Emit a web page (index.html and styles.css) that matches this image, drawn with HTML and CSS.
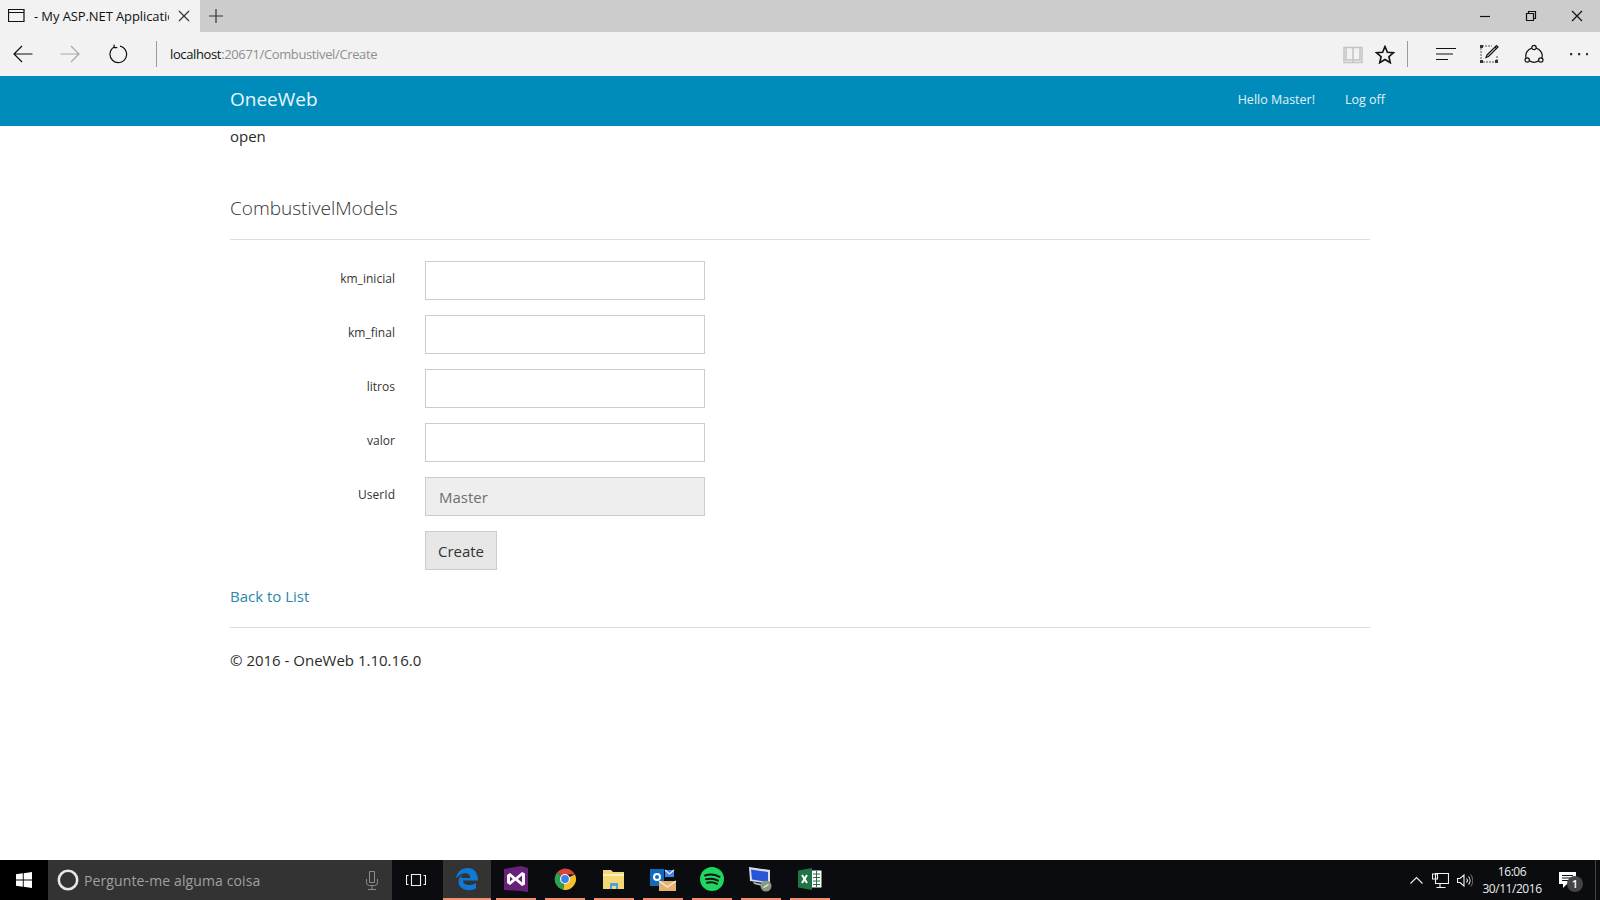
FILE: index.html
```html
<!DOCTYPE html>
<html lang="pt">
<head>
<meta charset="utf-8">
<title>My ASP.NET Application</title>
<link rel="stylesheet" href="styles.css">
</head>
<body>
<div class="tabbar">
  <div class="tab">
    <svg class="ico" width="18" height="14" viewBox="0 0 18 14"><path d="M.5.5h15.500v12H.5zM.5 3.500h15.500" class="s-black"/></svg>
    <span class="tab-title">- My ASP.NET Application</span>
    <svg class="tab-close" width="12" height="12" viewBox="0 0 12 12"><path d="M1 1l10 10M11 1L1 11" class="s-dark"/></svg>
  </div>
  <svg class="tab-new" width="14" height="14" viewBox="0 0 14 14"><path d="M7 0v14M0 7h14" class="s-dark"/></svg>
  <div class="win-controls">
    <svg width="12" height="12" viewBox="0 0 12 12"><path d="M1 6.500h10" class="s-black"/></svg>
    <svg width="12" height="12" viewBox="0 0 12 12"><path d="M1.500 3.500h7v7h-7zM3.500 3.500v-2h7v7h-2" class="s-black"/></svg>
    <svg width="12" height="12" viewBox="0 0 12 12"><path d="M1 1l10 10M11 1L1 11" class="s-black"/></svg>
  </div>
</div>
<div class="toolbar">
  <div class="tool-left">
    <svg width="20" height="18" viewBox="0 0 20 18"><path d="M19.500 9H1M9 1L1 9l8 8" class="s-black"/></svg>
    <svg width="20" height="18" viewBox="0 0 20 18"><path d="M.5 9H19M11 1l8 8-8 8" class="s-muted"/></svg>
    <svg class="i-refresh" width="20" height="20" viewBox="0 0 20 20"><path d="M6.200 3.100A8.300 8.300 0 1 0 12 2.200M6 .6l.4 3 2.900.1" class="s-black"/></svg>
  </div>
  <div class="address">
    <span class="host">localhost</span><span class="path">:20671/Combustivel/Create</span>
  </div>
  <div class="tool-right">
    <svg class="i-read" width="20" height="19" viewBox="0 0 20 19"><path d="M1 2.500h8.500l.5 1 .5-1H19v15h-8.500l-.5-1-.5 1H1zM10 3.500v13M3 2.500v12.500h7M17 2.500v12.500h-7" class="s-light"/></svg>
    <svg class="i-star" width="20" height="19" viewBox="0 0 20 19"><path d="M10 1.500l2.400 5.700 6.100.5-4.600 4 1.400 6-5.300-3.200-5.300 3.200 1.400-6-4.600-4 6.100-.5z" class="s-heavy"/></svg>
    <span class="tool-sep"></span>
    <svg class="i-hub" width="20" height="14" viewBox="0 0 20 14"><path d="M0 1.500h20M0 7h17M0 12.500h12" class="s-black"/></svg>
    <svg class="i-note" width="20" height="20" viewBox="0 0 20 20"><path d="M3 2h10M2 4v13M18 12v5M4 18h12" class="s-dash"/><path d="M1 1h3v3H1zM16 16h3v3h-3zM1 16h3v3H1z" class="f-dark"/><path d="M8 11L17.500 1.500l1.500 1.500L9.500 12.500 7 13.500zM16 3l1.500 1.500" class="s-black"/></svg>
    <svg class="i-share" width="20" height="20" viewBox="0 0 20 20"><circle cx="10" cy="3.500" r="2.200" class="s-black"/><circle cx="3.200" cy="16" r="2.200" class="s-black"/><circle cx="16.800" cy="16" r="2.200" class="s-black"/><path d="M7.900 4.100A8 8 0 0 0 2.100 14M12.100 4.100A8 8 0 0 1 17.900 14M5.400 16.800a8 8 0 0 0 9.200 0" class="s-black"/></svg>
    <svg class="i-more" width="18" height="4" viewBox="0 0 18 4"><path d="M0 1h2.200v2.200H0zM8 1h2.200v2.200H8zM16 1h2v2.200h-2z" class="f-dark"/></svg>
  </div>
</div>
<header class="navbar">
  <a class="brand">OneeWeb</a>
  <nav class="nav-links"><a>Hello Master!</a><a>Log off</a></nav>
</header>
<main class="container">
  <p class="open">open</p>
  <h4 class="form-title">CombustivelModels</h4>
  <hr class="rule">
  <form class="form">
    <label class="lbl">km_inicial</label><input class="field" type="text">
    <label class="lbl">km_final</label><input class="field" type="text">
    <label class="lbl">litros</label><input class="field" type="text">
    <label class="lbl">valor</label><input class="field" type="text">
    <label class="lbl">UserId</label><input class="field field-ro" type="text" value="Master" readonly>
    <span></span><div><button class="btn" type="button">Create</button></div>
  </form>
  <a class="back">Back to List</a>
  <hr class="rule rule-foot">
  <p class="foot">© 2016 - OneWeb 1.10.16.0</p>
</main>
<footer class="taskbar">
  <div class="start">
    <svg width="16" height="16" viewBox="0 0 16 16"><path d="M0 2.300l6.800-1v6.200H0zM7.700 1.200L16 0v7.500H7.700zM0 8.400h6.800v6.300l-6.800-1zM7.700 8.400H16V16l-8.300-1.200z" class="f-white"/></svg>
  </div>
  <div class="search">
    <svg width="22" height="22" viewBox="0 0 22 22"><circle cx="11" cy="11" r="9.200" class="s-cortana"/></svg>
    <span class="search-text">Pergunte-me alguma coisa</span>
    <svg class="mic" width="12" height="19" viewBox="0 0 12 19"><path d="M3.500.5h5v11h-5zM.5 8v3.500a3 3 0 0 0 3 3h5a3 3 0 0 0 3-3V8M6 14.500v3.500M2 18.500h8" class="s-mic"/></svg>
  </div>
  <div class="taskview">
    <svg width="20" height="14" viewBox="0 0 20 14"><path d="M5.500 1.500h9v11h-9z" class="s-white"/><path d="M2.500 2.500h-2v9h2M17.500 2.500h2v9h-2" class="s-white"/></svg>
  </div>
  <div class="apps">
    <div class="app app-active">
      <svg width="24" height="24" viewBox="0 0 24 24"><path d="M1 11.500C2 4.500 7 1 12.500 1 19 1 23 5.500 23 13.500H8c.2 5 7.500 6 13 2.500v5.500c-7 3.500-17.500 1.500-17.500-7 0-3 1.800-5.500 4.500-7-1 1-1.500 2-1.700 3.500h9c0-6-8.500-6.800-14.300.5z" class="f-edge"/></svg>
    </div>
    <div class="app">
      <svg width="24" height="26" viewBox="0 0 24 26"><path d="M0 3l17-3 7 2v24l-7-1-17-1z" class="f-vsbg"/><path d="M3 9l3-2 5.500 4.500L18 6l3 1.500v11L18 20l-6.500-5.500L6 19l-3-2zM6 10.500v5l3-2.500zM18 9.500L14 13l4 3.500z" class="f-white f-hole"/></svg>
    </div>
    <div class="app">
      <svg width="22" height="22" viewBox="0 0 22 22"><path d="M11 11L3 4.500A10.800 10.800 0 0 1 20.900 6.500H11z" class="f-red"/><path d="M11 11l9.900-4.500A10.800 10.800 0 0 1 9 21.700z" class="f-yellow"/><path d="M11 11L9 21.700A10.800 10.800 0 0 1 3 4.500z" class="f-green"/><circle cx="11" cy="11" r="5" class="f-white"/><circle cx="11" cy="11" r="3.900" class="f-blue"/></svg>
    </div>
    <div class="app">
      <svg width="22" height="20" viewBox="0 0 22 20"><path d="M0 1h8l2 2h11v17H0z" class="f-folder"/><path d="M0 5h21v2H0z" class="f-folder2"/><path d="M7 14h8v6h-2v-3H9v3H7z" class="f-foldblue"/></svg>
    </div>
    <div class="app">
      <svg width="26" height="26" viewBox="0 0 26 26"><path d="M0 3h14v17H0z" class="f-outlook"/><circle cx="7" cy="11" r="3" class="s-whitebold"/><path d="M15 4h9v7h-9z" class="f-blue"/><path d="M15 4l4.500 4L24 4" class="s-white"/><path d="M9 15h17v10H9z" class="f-envelope"/><path d="M9 15l8.500 6L26 15" class="s-white"/></svg>
    </div>
    <div class="app">
      <svg width="24" height="24" viewBox="0 0 24 24"><circle cx="12" cy="12" r="12" class="f-spotify"/><path d="M5 8.500c5-1.500 10-1 14.500 1.300M6 12.300c4-1.100 8.500-.7 12 1.300M7 15.800c3.500-.8 7-.5 10 1" class="s-spot"/></svg>
    </div>
    <div class="app">
      <svg width="26" height="26" viewBox="0 0 26 26"><path d="M1 1l21 3v14L2 15z" class="f-monitor"/><path d="M3 3.500l17 2.500v10L4 13.500z" class="f-screen"/><path d="M5 16l13 3v2L6 18z" class="f-monbase"/><circle cx="18" cy="20" r="5.500" class="f-badge"/><path d="M15.500 21.500l5-3" class="s-white"/></svg>
    </div>
    <div class="app">
      <svg width="24" height="22" viewBox="0 0 24 22"><path d="M13 2.500h10.500v17H13z" class="f-white"/><path d="M15 6h7M15 9.500h7M15 13h7M15 16.500h7M18.500 3v16" class="s-xlgrid"/><path d="M0 2.500L14 0v22L0 19.500z" class="f-excel"/><path d="M4 7l5 8M9 7l-5 8" class="s-whitebold"/></svg>
    </div>
  </div>
  <div class="tray">
    <svg class="i-chev" width="13" height="8" viewBox="0 0 13 8"><path d="M.5 7.500l6-6 6 6" class="s-white"/></svg>
    <svg class="i-net" width="17" height="15" viewBox="0 0 17 15"><path d="M3.500.5h13v10h-13zM8 10.500v3.500M4.500 14.500h9M.5 1h5v5h-5z" class="s-white"/></svg>
    <svg width="16" height="13" viewBox="0 0 16 13"><path d="M.5 4.500H3L7 1v11L3 8.500H.5zM9.500 4.500a3 3 0 0 1 0 4M11.500 2.500a6 6 0 0 1 0 8" class="s-white"/><path d="M13.500.5a9 9 0 0 1 0 12" class="s-dim"/></svg>
    <div class="clock"><span>16:06</span><span>30/11/2016</span></div>
    <div class="notif">
      <svg width="17" height="16" viewBox="0 0 17 16"><path d="M0 0h17v12H8l-4 4v-4H0z" class="f-white"/><path d="M3 3.500h11M3 6h11M3 8.500h8" class="s-black"/></svg>
      <span class="notif-badge">1</span>
    </div>
    <span class="show-desktop"></span>
  </div>
</footer>
</body>
</html>
```
FILE: styles.css
```css
* { box-sizing: border-box; }
html, body { margin: 0; height: 900px; overflow: hidden; }
body {
  display: flex; flex-direction: column; background: #fff; color: #2b2b2b;
  font-family: "Open Sans", "Liberation Sans", sans-serif; font-size: 15px;
}
svg { display: block; flex: none; fill: none; }
.s-black { stroke: #111; stroke-width: 1.2; }
.s-dark { stroke: #333; stroke-width: 1.2; }
.s-muted { stroke: #a8a8a8; stroke-width: 1.2; }
.s-light { stroke: #c4c4c4; stroke-width: 1.5; }
.s-heavy { stroke: #111; stroke-width: 1.6; }
.s-dash { stroke: #555; stroke-width: 1; stroke-dasharray: 2 1; }
.s-white { stroke: #f2f2f2; stroke-width: 1.1; }
.s-whitebold { stroke: #fff; stroke-width: 2; }
.s-dim { stroke: #666; stroke-width: 1.1; }
.s-cortana { stroke: #e6e6e6; stroke-width: 2.6; }
.s-mic { stroke: #8a8a8a; stroke-width: 1; }
.s-spot { stroke: #191414; stroke-width: 2; stroke-linecap: round; }
.s-xlgrid { stroke: #217346; stroke-width: 1; }
.f-dark { fill: #333; }
.f-white { fill: #fff; }
.f-hole { fill-rule: evenodd; }
.f-edge { fill: #0f79d6; }
.f-vsbg { fill: #68217a; }
.f-red { fill: #dc4437; }
.f-yellow { fill: #f5c02c; }
.f-green { fill: #2fa04f; }
.f-blue { fill: #3f83ea; }
.f-folder { fill: #f6d775; }
.f-folder2 { fill: #fdf0b5; }
.f-foldblue { fill: #4aa3d8; }
.f-outlook { fill: #0f6cbd; }
.f-envelope { fill: #e6b26f; }
.f-spotify { fill: #1ed760; }
.f-monitor { fill: #d8dde6; }
.f-screen { fill: #2a55d8; }
.f-monbase { fill: #b4bac4; }
.f-badge { fill: #8a9a80; }
.f-excel { fill: #217346; }

.tabbar { height: 32px; background: #ccc; display: flex; align-items: center; flex: none; }
.tab { width: 200px; height: 32px; background: #f2f2f2; display: flex; align-items: center; padding-left: 8px; }
.tab-title { width: 135px; margin-left: 8px; font-size: 13px; letter-spacing: -.1px; white-space: nowrap; overflow: hidden; color: #111; }
.tab-close { margin-left: 9px; }
.tab-new { margin-left: 9px; }
.win-controls { margin-left: auto; display: flex; gap: 34px; padding-right: 17px; align-items: center; }

.toolbar { height: 44px; background: #f2f2f2; display: flex; align-items: center; flex: none; }
.tool-left { display: flex; align-items: center; gap: 27px; padding-left: 13px; width: 156px; }
.i-refresh { margin-left: 1px; }
.address { height: 26px; flex: 1; border-left: 1px solid #9a9a9a; padding-left: 13px; font-size: 13px; line-height: 26px; letter-spacing: -.37px; }
.host { color: #111; }
.path { color: #8f8f8f; }
.tool-right { display: flex; align-items: center; padding-right: 12px; }
.i-star { margin-left: 12px; }
.tool-sep { width: 1px; height: 26px; background: #9a9a9a; margin: 0 28px 0 12px; }
.i-note { margin-left: 23px; }
.i-share { margin-left: 25px; }
.i-more { margin-left: 26px; }

.navbar { height: 50px; background: #008cba; display: flex; align-items: center; padding: 0 215px 4px 230px; flex: none; color: #fff; }
.brand { font-size: 19px; color: #e8f6fb; }
.nav-links { margin-left: auto; display: flex; gap: 30px; font-size: 12.5px; color: #e0f2f8; }

.container { flex: 1; width: 1140px; margin: 0 auto; }
.open { margin: 0; line-height: 21px; }
.form-title { margin: 50px 0 0; font-size: 19px; font-weight: 300; line-height: 22px; color: #333; }
.rule { border: 0; border-top: 1px solid #ddd; margin: 20px 0 0; }
.form { display: grid; grid-template-columns: 165px 280px; column-gap: 30px; row-gap: 15px; margin-top: 21px; }
.lbl { font-size: 12px; letter-spacing: .03px; text-align: right; padding-top: 9px; color: #333; }
.field { height: 39px; width: 280px; border: 1px solid #ccc; background: #fff; padding: 0 13px; font: inherit; color: #6f6f6f; outline: 0; display: block; border-radius: 0; }
.field-ro { background: #eee; }
.btn { height: 39px; width: 72px; border: 1px solid #ccc; background: #e7e7e7; font: inherit; color: #333; padding: 0; display: block; border-radius: 0; }
.back { display: block; margin-top: 15px; line-height: 22px; color: #2a87ab; }
.rule-foot { margin-top: 20px; }
.foot { margin: 22px 0 0; line-height: 21px; }

.taskbar { height: 40px; background: #0a0c0f; display: flex; align-items: center; flex: none; color: #eee; }
.start { width: 48px; height: 40px; display: flex; align-items: center; justify-content: center; background: #000; }
.search { width: 344px; height: 40px; background: #333; display: flex; align-items: center; padding-left: 9px; padding-right: 14px; }
.search-text { margin-left: 5px; font-size: 14px; letter-spacing: .12px; color: #a0a0a0; }
.mic { margin-left: auto; }
.taskview { width: 48px; margin-right: 2px; display: flex; justify-content: center; }
.apps { display: flex; gap: 9px; }
.app { width: 40px; height: 40px; display: flex; align-items: center; justify-content: center; border-bottom: 2px solid #f58f6c; }
.app-active { width: 48px; margin-left: 1px; margin-right: -4px; background: #333; }
.tray { margin-left: auto; display: flex; align-items: center; height: 40px; }
.i-chev { margin-right: 9px; }
.i-net { margin-right: 8px; }
.clock { width: 70px; margin-left: 4px; display: flex; flex-direction: column; align-items: center; font-size: 12px; line-height: 17px; letter-spacing: -.45px; }
.notif { position: relative; width: 44px; display: flex; justify-content: center; margin-right: 4px; padding-right: 4px; }
.notif-badge { position: absolute; left: 20px; top: 4px; width: 16px; height: 16px; border-radius: 50%; background: #444; color: #fff; font-size: 11px; line-height: 16px; text-align: center; font-weight: 600; }
.show-desktop { width: 1px; height: 40px; background: #444; margin-right: 4px; }
```
